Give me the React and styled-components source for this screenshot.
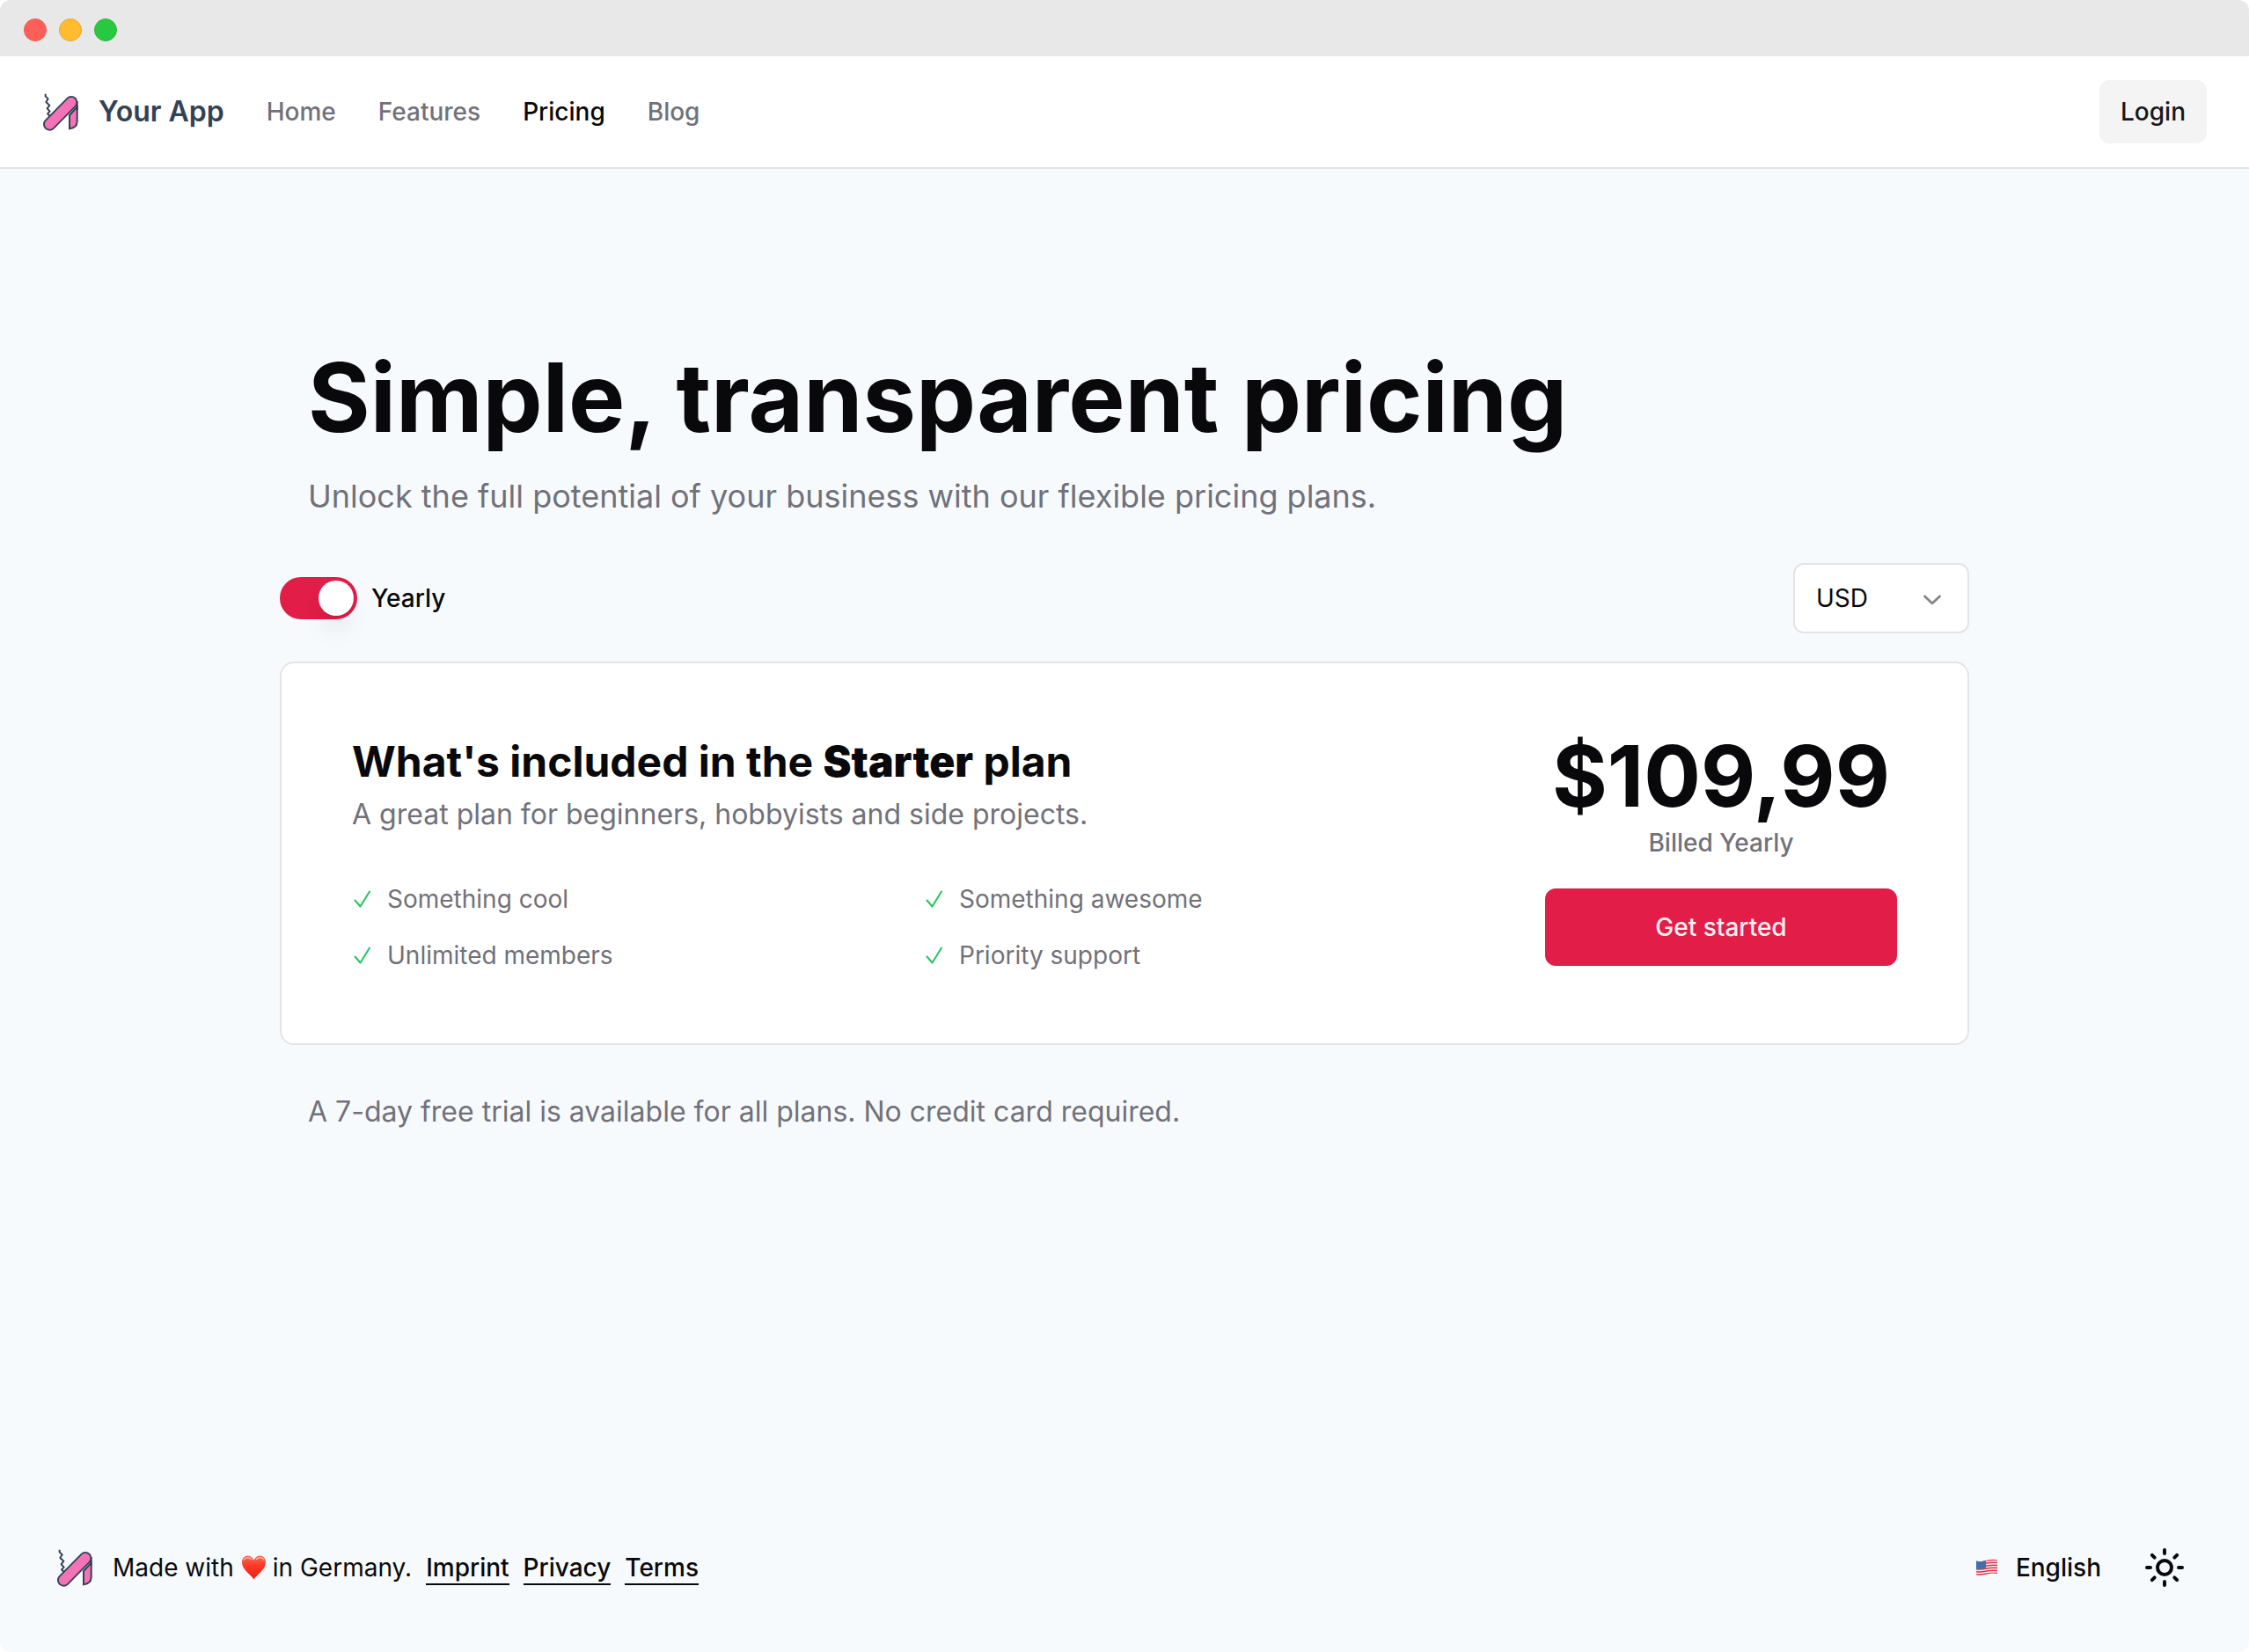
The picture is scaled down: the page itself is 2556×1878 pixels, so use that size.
import React, { useState } from "react";
import styled, { createGlobalStyle } from "styled-components";
import { Sun } from "lucide-react";

const GlobalStyle = createGlobalStyle`
  *, *::before, *::after { box-sizing: border-box; }
  html { background: #ffffff; }
  body { margin: 0; font-family: Inter, "Liberation Sans", sans-serif; color: #09090b; }
  h1, h2, p, ul { margin: 0; padding: 0; }
  button, input, select { font: inherit; color: inherit; }
  a { color: inherit; text-decoration: none; }
`;

const Window = styled.div`
  min-height: 100vh;
  display: flex;
  flex-direction: column;
  background: #f7fafd;
  border-radius: 12px;
  overflow: hidden;
`;

const TitleBar = styled.div`
  display: flex;
  align-items: center;
  gap: 14px;
  height: 64px;
  padding: 4px 27px 0;
  background: #e8e8e8;
`;

const Light = styled.span`
  width: 26px;
  height: 26px;
  border-radius: 50%;
  border: 1px solid ${(p) => p.$edge};
  background: ${(p) => p.$fill};
`;

const Header = styled.header`
  display: flex;
  align-items: center;
  justify-content: space-between;
  height: 128px;
  padding: 0 48px;
  background: #ffffff;
  border-bottom: 2px solid #e4e4e7;
`;

const Nav = styled.nav`
  display: flex;
  align-items: center;
  gap: 48px;
`;

const Brand = styled.a`
  display: flex;
  align-items: center;
  gap: 20px;
  font-size: 32px;
  line-height: 40px;
  font-weight: 600;
  color: #334155;
`;

const NavLink = styled.a`
  font-size: 28px;
  line-height: 40px;
  font-weight: 500;
  color: ${(p) => (p.$active ? "#09090b" : "#71717a")};
`;

const LoginButton = styled.button`
  height: 72px;
  padding: 0 24px;
  border: 0;
  border-radius: 12px;
  background: #f4f4f5;
  color: #18181b;
  font-size: 28px;
  font-weight: 500;
`;

const Main = styled.main`
  width: 100%;
  max-width: 1984px;
  margin: 0 auto;
  padding: 192px 32px 64px;
`;

const Intro = styled.div`
  padding: 0 32px 48px;
`;

const Title = styled.h1`
  font-size: 108px;
  line-height: 136px;
  font-weight: 700;
`;

const Lead = styled.p`
  margin-top: 16px;
  font-size: 36px;
  line-height: 56px;
  color: #71717a;
`;

const Controls = styled.div`
  display: flex;
  align-items: center;
  justify-content: space-between;
  margin-bottom: 32px;
`;

const SwitchLabel = styled.label`
  display: flex;
  align-items: center;
  gap: 16px;
  font-size: 28px;
  line-height: 40px;
  font-weight: 500;
`;

const SwitchInput = styled.input`
  appearance: none;
  display: flex;
  justify-content: flex-start;
  width: 88px;
  height: 48px;
  margin: 0;
  padding: 4px;
  border-radius: 24px;
  background: #e4e4e7;

  &::before {
    content: "";
    width: 40px;
    height: 40px;
    border-radius: 50%;
    background: #ffffff;
    box-shadow: 0 20px 30px -6px rgba(0, 0, 0, 0.1), 0 8px 12px -8px rgba(0, 0, 0, 0.1);
  }

  &:checked {
    justify-content: flex-end;
    background: #e11d48;
  }
`;

const SelectBox = styled.div`
  position: relative;
  width: 200px;

  svg {
    position: absolute;
    top: 24px;
    right: 26px;
    pointer-events: none;
  }
`;

const CurrencySelect = styled.select`
  appearance: none;
  width: 100%;
  height: 80px;
  padding: 0 72px 0 24px;
  border: 2px solid #e4e4e7;
  border-radius: 12px;
  background: #ffffff;
  font-size: 28px;
`;

const Card = styled.section`
  display: flex;
  align-items: flex-start;
  gap: 80px;
  padding: 80px;
  border: 2px solid #e4e4e7;
  border-radius: 16px;
  background: #ffffff;
`;

const PlanDetails = styled.div`
  flex: 1;
`;

const PlanTitle = styled.h2`
  font-size: 48px;
  line-height: 64px;
  font-weight: 700;

  strong { font-weight: 900; }
`;

const PlanText = styled.p`
  margin: 4px 0 52px;
  font-size: 32px;
  line-height: 48px;
  color: #71717a;
`;

const FeatureList = styled.ul`
  display: grid;
  grid-template-columns: 1fr 1fr;
  gap: 24px;
  list-style: none;
`;

const Feature = styled.li`
  display: flex;
  align-items: center;
  gap: 16px;
  font-size: 28px;
  line-height: 40px;
  color: #71717a;
`;

const Offer = styled.div`
  width: 400px;
  text-align: center;
`;

const Price = styled.p`
  font-size: 96px;
  line-height: 96px;
  font-weight: 700;
`;

const Billing = styled.p`
  margin: 8px 0 32px;
  font-size: 28px;
  line-height: 40px;
  font-weight: 500;
  color: #71717a;
`;

const StartButton = styled.button`
  width: 100%;
  height: 88px;
  border: 0;
  border-radius: 12px;
  background: #e11d48;
  color: #fff1f2;
  font-size: 28px;
  font-weight: 500;
`;

const TrialNote = styled.p`
  padding: 52px 32px 0;
  font-size: 32px;
  line-height: 48px;
  color: #71717a;
`;

const Footer = styled.footer`
  display: flex;
  align-items: center;
  justify-content: space-between;
  margin-top: auto;
  padding: 0 64px 64px;
  font-size: 28px;
  line-height: 40px;
`;

const FooterGroup = styled.div`
  display: flex;
  align-items: center;
  gap: ${(p) => p.$gap}px;
`;

const MadeWith = styled.p`
  display: flex;
  align-items: center;
  gap: 8px;
`;

const FooterLink = styled.a`
  height: 40px;
  border-bottom: 2px solid #09090b;
  font-weight: 500;
`;

const PlainButton = styled.button`
  display: flex;
  align-items: center;
  gap: 20px;
  height: 64px;
  padding: ${(p) => (p.$icon ? "8px" : "0")};
  border: 0;
  background: transparent;
  font-weight: 500;
`;

const Logo = () => (
  <svg width="44" height="44" viewBox="25 28 132 132" fill="none" aria-hidden="true">
    <path d="M36 33v8l9 9-7 11 12 11-8 11 9 10-8 8 8 8" stroke="#334155" strokeWidth="6" strokeLinejoin="round" />
    <path d="M144 78v48c0 14-10 24-26 26v-46z" fill="#f472b6" stroke="#334155" strokeWidth="6" />
    <path d="M50 137 124 62" stroke="#334155" strokeWidth="44" strokeLinecap="round" />
    <path d="M50 137 124 62" stroke="#f472b6" strokeWidth="33" strokeLinecap="round" />
    <path d="M144 58v30" stroke="#334155" strokeWidth="6" />
  </svg>
);

const Chevron = () => (
  <svg width="32" height="32" viewBox="0 0 15 15" fill="#808080" stroke="#808080" strokeWidth="0.3" aria-hidden="true">
    <path d="M3.135 6.158c.189-.201.505-.212.707-.023L7.5 9.565l3.658-3.43c.202-.189.518-.178.707.023.189.202.178.518-.023.707l-4 3.75a.5.5 0 0 1-.684 0l-4-3.75c-.201-.189-.212-.505-.023-.707Z" />
  </svg>
);

const Tick = () => (
  <svg width="24" height="24" viewBox="0 0 24 24" fill="none" stroke="#22c55e" strokeWidth="2" strokeLinecap="round" strokeLinejoin="round" aria-hidden="true">
    <path d="M3.500 13.500l6 7L20 3.500" />
  </svg>
);

const Heart = () => (
  <svg width="28" height="28" viewBox="0 0 28 28" role="img" aria-label="love">
    <defs>
      <linearGradient id="heart" x1="0" y1="0" x2="0" y2="1">
        <stop offset="0" stopColor="#ff6a55" />
        <stop offset="0.4" stopColor="#fb3b2b" />
        <stop offset="1" stopColor="#ee1c12" />
      </linearGradient>
    </defs>
    <path d="M14.500 27.500C11.500 22 1 17 1 8 1 3.500 4 .5 7.500.5c3.500 0 6 2.500 7 5.500 1-3 3.500-5.500 7-5.500C25 .5 28 3.500 28 8c0 9-10.500 14-13.500 19.500z" fill="url(#heart)" />
    <path d="M3.500 5c1-2.500 5.500-3.500 8-.5M17.500 4.500c2.500-3 7-2 8 .5" stroke="#ffb3a6" strokeWidth="1.500" fill="none" strokeLinecap="round" />
  </svg>
);

const Flag = () => (
  <svg width="26" height="20" viewBox="0 0 26 20" aria-hidden="true">
    <defs>
      <clipPath id="wave">
        <path d="M1 2.500C6 4 10 2.500 14 1.500S22 .5 25 1.500V17c-4-1-7-.5-11 .5S6 20 1 18.500z" />
      </clipPath>
    </defs>
    <g clipPath="url(#wave)">
      <rect width="26" height="20" fill="#f5eef0" />
      {[2, 5, 8, 11, 14, 17].map((y) => (
        <path key={y} d={`M0 ${y + 0.5}c6 1.500 10 0 14-.7s8-1 12 0`} stroke="#d8344c" strokeWidth="1.400" fill="none" />
      ))}
      <path d="M0 0h12v10.500c-4 1-8 1.500-12 .8z" fill="#3f6fae" />
    </g>
  </svg>
);

const links = ["Home", "Features", "Pricing", "Blog"];
const features = ["Something cool", "Something awesome", "Unlimited members", "Priority support"];

export default function App() {
  const [yearly, setYearly] = useState(true);
  return (
    <>
      <GlobalStyle />
      <Window>
        <TitleBar>
          <Light $fill="#ff5f57" $edge="#f0564e" />
          <Light $fill="#febc2e" $edge="#e5a53a" />
          <Light $fill="#28c840" $edge="#2db544" />
        </TitleBar>
        <Header>
          <Nav aria-label="Main">
            <Brand href="#home"><Logo />Your App</Brand>
            {links.map((name) => (
              <NavLink key={name} href={`#${name.toLowerCase()}`} $active={name === "Pricing"}>{name}</NavLink>
            ))}
          </Nav>
          <LoginButton type="button">Login</LoginButton>
        </Header>
        <Main>
          <Intro>
            <Title>Simple, transparent pricing</Title>
            <Lead>Unlock the full potential of your business with our flexible pricing plans.</Lead>
          </Intro>
          <Controls>
            <SwitchLabel>
              <SwitchInput type="checkbox" role="switch" checked={yearly} onChange={(e) => setYearly(e.target.checked)} />
              Yearly
            </SwitchLabel>
            <SelectBox>
              <CurrencySelect aria-label="Currency" defaultValue="USD">
                <option>USD</option>
              </CurrencySelect>
              <Chevron />
            </SelectBox>
          </Controls>
          <Card>
            <PlanDetails>
              <PlanTitle>What's included in the <strong>Starter</strong> plan</PlanTitle>
              <PlanText>A great plan for beginners, hobbyists and side projects.</PlanText>
              <FeatureList>
                {features.map((name) => (
                  <Feature key={name}><Tick />{name}</Feature>
                ))}
              </FeatureList>
            </PlanDetails>
            <Offer>
              <Price>$109,99</Price>
              <Billing>Billed Yearly</Billing>
              <StartButton type="button">Get started</StartButton>
            </Offer>
          </Card>
          <TrialNote>A 7-day free trial is available for all plans. No credit card required.</TrialNote>
        </Main>
        <Footer>
          <FooterGroup $gap={16}>
            <FooterGroup $gap={20}>
              <Logo />
              <MadeWith>Made with <Heart /> in Germany.</MadeWith>
            </FooterGroup>
            <FooterLink href="#imprint">Imprint</FooterLink>
            <FooterLink href="#privacy">Privacy</FooterLink>
            <FooterLink href="#terms">Terms</FooterLink>
          </FooterGroup>
          <FooterGroup $gap={40}>
            <PlainButton type="button"><Flag />English</PlainButton>
            <PlainButton type="button" $icon aria-label="Switch theme"><Sun size={48} strokeWidth={2} /></PlainButton>
          </FooterGroup>
        </Footer>
      </Window>
    </>
  );
}
